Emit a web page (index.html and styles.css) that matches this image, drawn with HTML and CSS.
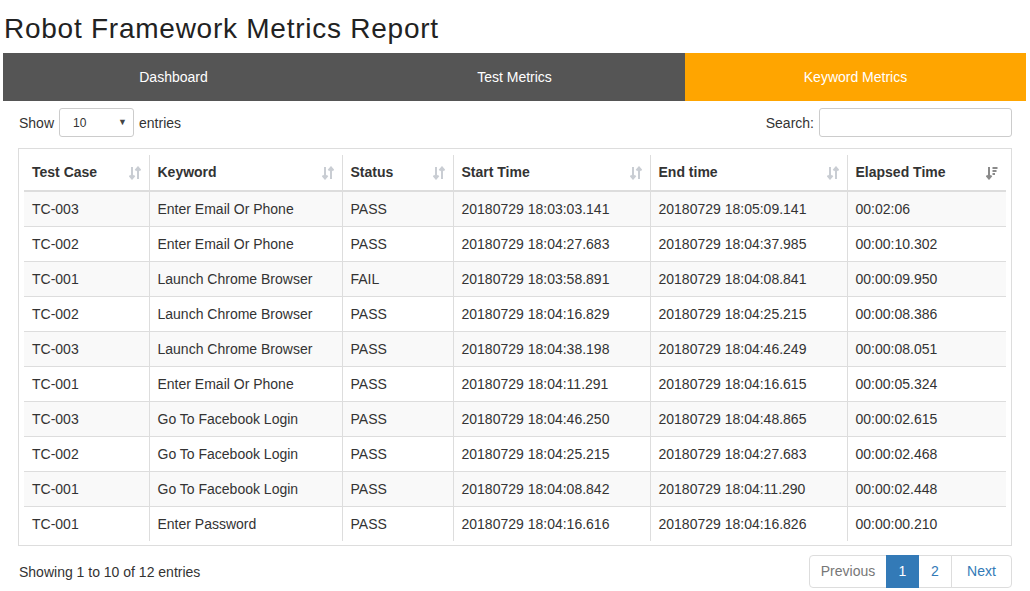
FILE: index.html
```html
<!DOCTYPE html>
<html>
<head>
<meta charset="utf-8">
<link rel="stylesheet" href="styles.css">
</head>
<body>
<div class="page">
  <h1 class="title">Robot Framework Metrics Report</h1>
  <nav class="tabs">
    <div class="tab">Dashboard</div>
    <div class="tab">Test Metrics</div>
    <div class="tab active">Keyword Metrics</div>
  </nav>
  <div class="dt">
    <div class="controls">
      <label class="length">Show
        <span class="select-wrap">
          <select class="select"><option>10</option></select>
          <span class="caret">▼</span>
        </span>
        entries</label>
      <label class="search">Search: <input class="search-input" type="text"></label>
    </div>
    <div class="table-box">
      <table class="grid">
        <colgroup>
          <col style="width:125px"><col style="width:193px"><col style="width:111px"><col style="width:197px"><col style="width:197px"><col style="width:159px">
        </colgroup>
        <thead>
          <tr>
            <th><div class="th">Test Case<svg class="sort" viewBox="0 0 12 14"><path d="M3 1v11M0.5 9.5L3 12.5L5.5 9.5M9 13V2M6.5 4.5L9 1.5L11.5 4.5"/></svg></div></th>
            <th><div class="th">Keyword<svg class="sort" viewBox="0 0 12 14"><path d="M3 1v11M0.5 9.5L3 12.5L5.5 9.5M9 13V2M6.5 4.5L9 1.5L11.5 4.5"/></svg></div></th>
            <th><div class="th">Status<svg class="sort" viewBox="0 0 12 14"><path d="M3 1v11M0.5 9.5L3 12.5L5.5 9.5M9 13V2M6.5 4.5L9 1.5L11.5 4.5"/></svg></div></th>
            <th><div class="th">Start Time<svg class="sort" viewBox="0 0 12 14"><path d="M3 1v11M0.5 9.5L3 12.5L5.5 9.5M9 13V2M6.5 4.5L9 1.5L11.5 4.5"/></svg></div></th>
            <th><div class="th">End time<svg class="sort" viewBox="0 0 12 14"><path d="M3 1v11M0.5 9.5L3 12.5L5.5 9.5M9 13V2M6.5 4.5L9 1.5L11.5 4.5"/></svg></div></th>
            <th><div class="th">Elapsed Time<svg class="sort desc" viewBox="0 0 12 14"><path d="M3 1v11M0.5 9.5L3 12.5L5.5 9.5M6.5 2h5M6.5 5h4M6.5 8h2.5"/></svg></div></th>
          </tr>
        </thead>
        <tbody>
          <tr><td>TC-003</td><td>Enter Email Or Phone</td><td>PASS</td><td>20180729 18:03:03.141</td><td>20180729 18:05:09.141</td><td>00:02:06</td></tr>
          <tr><td>TC-002</td><td>Enter Email Or Phone</td><td>PASS</td><td>20180729 18:04:27.683</td><td>20180729 18:04:37.985</td><td>00:00:10.302</td></tr>
          <tr><td>TC-001</td><td>Launch Chrome Browser</td><td>FAIL</td><td>20180729 18:03:58.891</td><td>20180729 18:04:08.841</td><td>00:00:09.950</td></tr>
          <tr><td>TC-002</td><td>Launch Chrome Browser</td><td>PASS</td><td>20180729 18:04:16.829</td><td>20180729 18:04:25.215</td><td>00:00:08.386</td></tr>
          <tr><td>TC-003</td><td>Launch Chrome Browser</td><td>PASS</td><td>20180729 18:04:38.198</td><td>20180729 18:04:46.249</td><td>00:00:08.051</td></tr>
          <tr><td>TC-001</td><td>Enter Email Or Phone</td><td>PASS</td><td>20180729 18:04:11.291</td><td>20180729 18:04:16.615</td><td>00:00:05.324</td></tr>
          <tr><td>TC-003</td><td>Go To Facebook Login</td><td>PASS</td><td>20180729 18:04:46.250</td><td>20180729 18:04:48.865</td><td>00:00:02.615</td></tr>
          <tr><td>TC-002</td><td>Go To Facebook Login</td><td>PASS</td><td>20180729 18:04:25.215</td><td>20180729 18:04:27.683</td><td>00:00:02.468</td></tr>
          <tr><td>TC-001</td><td>Go To Facebook Login</td><td>PASS</td><td>20180729 18:04:08.842</td><td>20180729 18:04:11.290</td><td>00:00:02.448</td></tr>
          <tr><td>TC-001</td><td>Enter Password</td><td>PASS</td><td>20180729 18:04:16.616</td><td>20180729 18:04:16.826</td><td>00:00:00.210</td></tr>
        </tbody>
      </table>
    </div>
    <div class="footer">
      <div class="info">Showing 1 to 10 of 12 entries</div>
      <ul class="pager">
        <li class="pg disabled prev">Previous</li>
        <li class="pg current one">1</li>
        <li class="pg two">2</li>
        <li class="pg next">Next</li>
      </ul>
    </div>
  </div>
</div>
</body>
</html>
```

FILE: styles.css
```css
* { box-sizing: border-box; }
html, body { margin: 0; padding: 0; background: #fff; }
body {
  font-family: "Liberation Sans", Arial, sans-serif;
  font-size: 14px;
  color: #333;
}
.page { padding: 0 4px 0 3px; }
.title {
  margin: 0;
  padding: 13px 0 8px 1px;
  height: 53px;
  font-size: 28px;
  line-height: 32px;
  letter-spacing: 0.75px;
  font-weight: normal;
  color: #222;
}
.tabs {
  display: flex;
  height: 48px;
  background: #555;
}
.tab {
  flex: 1;
  display: flex;
  align-items: center;
  justify-content: center;
  color: #fff;
  font-size: 14px;
}
.tab.active { background: #ffa500; }
.dt { padding: 7px 14px 0 15px; }
.controls {
  display: flex;
  justify-content: space-between;
  align-items: center;
  height: 29px;
}
.length, .search {
  display: flex;
  align-items: center;
  gap: 5px;
  padding-left: 1px;
}
.select-wrap { position: relative; display: inline-block; }
.select {
  appearance: none;
  -webkit-appearance: none;
  width: 75px;
  height: 29px;
  border: 1px solid #ccc;
  border-radius: 3px;
  background: #fff;
  font-family: inherit;
  font-size: 12px;
  color: #333;
  padding: 0 0 0 13px;
}
.caret {
  position: absolute;
  right: 7px;
  top: 9px;
  font-size: 9px;
  color: #444;
  pointer-events: none;
}
.search-input {
  width: 193px;
  height: 29px;
  border: 1px solid #ccc;
  border-radius: 3px;
  margin: 0;
}
.table-box {
  margin-top: 11px;
  border: 1px solid #ddd;
  padding: 6px 5px 4px 5px;
}
.grid {
  width: 100%;
  table-layout: fixed;
  border-collapse: collapse;
  border-spacing: 0;
}
.grid th, .grid td {
  padding: 8px;
  line-height: 18px;
  text-align: left;
  white-space: nowrap;
  border-left: 1px solid #ddd;
}
.grid th:first-child, .grid td:first-child { border-left: none; }
.grid th {
  font-weight: bold;
  line-height: 19px;
  border-bottom: 2px solid #ddd;
  color: #333;
}
.th {
  display: flex;
  justify-content: space-between;
  align-items: center;
}
.sort {
  width: 12px;
  height: 14px;
  fill: none;
  stroke: #c9cdd3;
  stroke-width: 2;
  flex: none;
}
.sort.desc { stroke: #8a8a8a; }
.grid td { border-top: 1px solid #ddd; }
.grid tbody tr:first-child td { border-top: none; }
.grid tbody tr:nth-child(odd) { background: #f9f9f9; }
.footer {
  display: flex;
  justify-content: space-between;
  align-items: center;
  margin-top: 9px;
}
.info { padding-left: 1px; }
.pager {
  display: flex;
  list-style: none;
  margin: 0;
  padding: 0;
}
.pg {
  height: 33px;
  line-height: 31px;
  text-align: center;
  border: 1px solid #ddd;
  margin-left: -1px;
  color: #337ab7;
  background: #fff;
}
.pg.prev { width: 78px; margin-left: 0; }
.pg.one { width: 33px; }
.pg.two { width: 34px; }
.pg.next { width: 61px; }
.pg:first-child { border-radius: 4px 0 0 4px; }
.pg:last-child { border-radius: 0 4px 4px 0; }
.pg.disabled { color: #777; }
.pg.current { background: #337ab7; border-color: #337ab7; color: #fff; position: relative; }
```
